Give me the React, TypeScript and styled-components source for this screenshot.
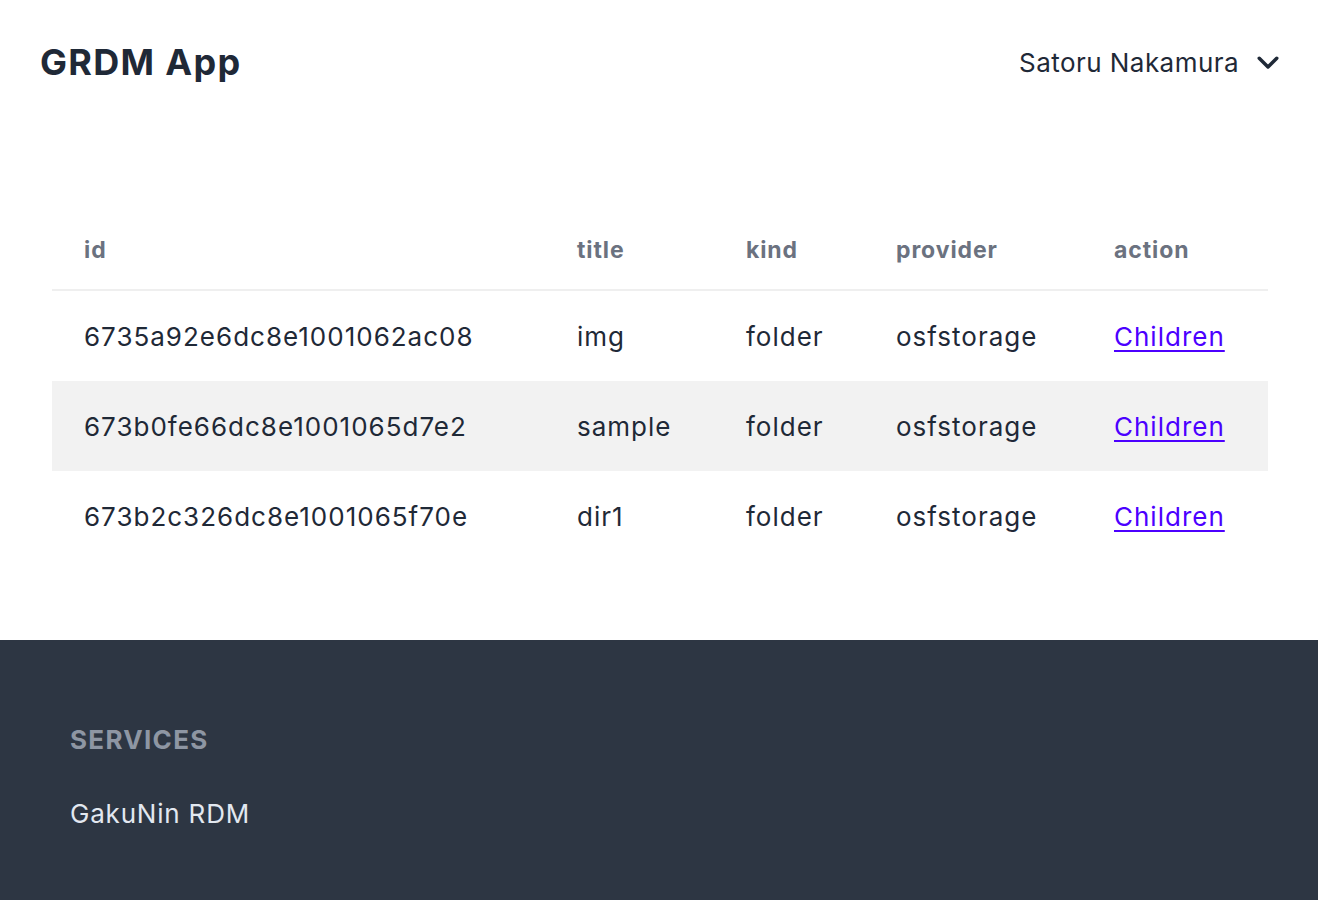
import React from "react";
import styled, { createGlobalStyle } from "styled-components";

interface FileRow {
  id: string;
  title: string;
  kind: string;
  provider: string;
}

const rows: FileRow[] = [
  { id: "6735a92e6dc8e1001062ac08", title: "img", kind: "folder", provider: "osfstorage" },
  { id: "673b0fe66dc8e1001065d7e2", title: "sample", kind: "folder", provider: "osfstorage" },
  { id: "673b2c326dc8e1001065f70e", title: "dir1", kind: "folder", provider: "osfstorage" },
];

const columns = [
  { key: "id", label: "id", width: 493 },
  { key: "title", label: "title", width: 169 },
  { key: "kind", label: "kind", width: 150 },
  { key: "provider", label: "provider", width: 218 },
  { key: "action", label: "action", width: 186 },
];

const ChevronDown = () => (
  <svg width="30" height="30" viewBox="0 0 24 24" fill="none">
    <polyline
      points="5 9 12 16 19 9"
      stroke="#1f2937"
      strokeWidth="2.8"
      strokeLinecap="round"
      strokeLinejoin="round"
    />
  </svg>
);

const App: React.FC = () => {
  return (
    <Page>
      <GlobalStyle />
      <Header>
        <Brand>GRDM App</Brand>
        <UserMenu>
          <span>Satoru Nakamura</span>
          <ChevronDown />
        </UserMenu>
      </Header>
      <Main>
        <Table>
          <colgroup>
            {columns.map((c) => (
              <col key={c.key} style={{ width: c.width }} />
            ))}
          </colgroup>
          <thead>
            <tr>
              {columns.map((c) => (
                <HeadCell key={c.key}>{c.label}</HeadCell>
              ))}
            </tr>
          </thead>
          <tbody>
            {rows.map((r, i) => (
              <BodyRow key={r.id} $striped={i % 2 === 1}>
                <Cell>{r.id}</Cell>
                <Cell>{r.title}</Cell>
                <Cell>{r.kind}</Cell>
                <Cell>{r.provider}</Cell>
                <Cell>
                  <ActionLink href="#">Children</ActionLink>
                </Cell>
              </BodyRow>
            ))}
          </tbody>
        </Table>
      </Main>
      <Footer>
        <FooterHeading>SERVICES</FooterHeading>
        <FooterItem>GakuNin RDM</FooterItem>
      </Footer>
    </Page>
  );
};
export default App;

const GlobalStyle = createGlobalStyle`
  html, body {
    margin: 0;
    padding: 0;
    background: #ffffff;
  }
  body {
    font-family: "Inter", "Noto Sans", sans-serif;
    color: #1f2937;
  }
`;

const Page = styled.div`
  min-height: 900px;
  display: flex;
  flex-direction: column;
`;

const Header = styled.header`
  height: 124px;
  padding: 0 35px 0 40px;
  display: flex;
  align-items: center;
  justify-content: space-between;
  box-sizing: border-box;
`;

const Brand = styled.div`
  font-size: 36px;
  font-weight: 700;
  color: #1f2937;
  letter-spacing: 1.3px;
`;

const UserMenu = styled.div`
  display: flex;
  align-items: center;
  gap: 14px;
  font-size: 26px;
  letter-spacing: 0.45px;
  color: #1f2937;
  cursor: pointer;
`;

const Main = styled.main`
  padding: 86px 50px 79px 52px;
`;

const Table = styled.table`
  width: 1216px;
  border-collapse: collapse;
  table-layout: fixed;
`;

const HeadCell = styled.th`
  height: 79px;
  padding: 0 0 0 32px;
  text-align: left;
  font-size: 23px;
  font-weight: 700;
  letter-spacing: 0.9px;
  color: #6b7280;
  border-bottom: 2px solid #efefef;
  vertical-align: middle;
`;

const BodyRow = styled.tr<{ $striped: boolean }>`
  background: ${(p) => (p.$striped ? "#f2f2f2" : "#ffffff")};
`;

const Cell = styled.td`
  height: 90px;
  padding: 0 0 0 32px;
  font-size: 26px;
  letter-spacing: 1px;
  color: #1f2937;
  vertical-align: middle;
  white-space: nowrap;
`;

const ActionLink = styled.a`
  color: #4c00ff;
  text-decoration: underline;
  text-underline-offset: 4px;
`;

const Footer = styled.footer`
  flex: 1;
  background: #2d3643;
  padding: 84px 70px 60px;
  display: flex;
  flex-direction: column;
  gap: 43px;
`;

const FooterHeading = styled.div`
  font-size: 26px;
  font-weight: 700;
  color: #8e96a3;
  letter-spacing: 1.3px;
`;

const FooterItem = styled.div`
  font-size: 26px;
  letter-spacing: 0.8px;
  color: #e2e8f0;
`;
